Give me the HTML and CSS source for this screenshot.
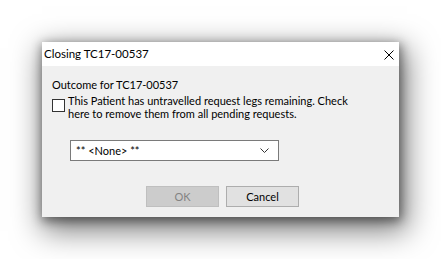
FILE: index.html
```html
<!DOCTYPE html>
<html>
<head>
<meta charset="utf-8">
<link rel="stylesheet" href="styles.css">
</head>
<body>
<div class="dialog">
  <div class="titlebar">
    <span class="title">Closing TC17-00537</span>
    <span class="close">
      <svg width="10" height="10" viewBox="0 0 10 10"><path d="M0.5 0.5 L9.5 9.5 M9.5 0.5 L0.5 9.5" stroke="#000" stroke-width="1" fill="none"/></svg>
    </span>
  </div>
  <div class="content">
    <div class="label">Outcome for TC17-00537</div>
    <div class="check-row">
      <span class="checkbox"></span>
      <span class="check-text">This Patient has untravelled request legs remaining. Check<br>here to remove them from all pending requests.</span>
    </div>
    <div class="combo">
      <span class="combo-text">** &lt;None&gt; **</span>
      <svg class="chevron" width="9" height="5" viewBox="0 0 9 5"><path d="M0.5 0.5 L4.5 4.5 L8.5 0.5" stroke="#333" stroke-width="1" fill="none"/></svg>
    </div>
    <div class="buttons">
      <button class="btn disabled">OK</button>
      <button class="btn">Cancel</button>
    </div>
  </div>
</div>
</body>
</html>
```
FILE: styles.css
```css
html, body {
  margin: 0;
  padding: 0;
  background: #ffffff;
}
body {
  box-sizing: border-box;
  width: 441px;
  height: 259px;
  overflow: hidden;
  padding: 42px 0 0 42px;
  font-family: "Lato", "Noto Sans", sans-serif;
  font-size: 11px;
  color: #000;
}
.dialog {
  width: 357px;
  height: 175px;
  background: #f0f0f0;
  box-shadow: 4px 10px 28px 4px rgba(0,0,0,0.5), 1px 3px 10px 1px rgba(0,0,0,0.45);
  display: flex;
  flex-direction: column;
}
.titlebar {
  height: 24px;
  flex: none;
  background: #ffffff;
  display: flex;
  align-items: center;
  justify-content: space-between;
  padding: 0 4px 0 2px;
  box-sizing: border-box;
}
.title {
  font-size: 11.5px;
  line-height: 14px;
}
.close {
  display: flex;
  width: 10px;
  height: 10px;
  margin-right: 1px;
  margin-top: 2px;
}
.content {
  padding: 12px 0 0 10px;
  display: flex;
  flex-direction: column;
}
.label {
  line-height: 14px;
}
.check-row {
  display: flex;
  align-items: flex-start;
  margin-top: 2px;
}
.checkbox {
  width: 11px;
  height: 11px;
  border: 1px solid #333;
  background: #fff;
  margin-top: 5px;
  flex: none;
}
.check-text {
  margin-left: 3px;
  line-height: 13px;
}
.combo {
  margin: 20px 0 0 18px;
  width: 209px;
  height: 21px;
  flex: none;
  box-sizing: border-box;
  border: 1px solid #7a7a7a;
  background: #fff;
  display: flex;
  align-items: center;
  justify-content: space-between;
  padding: 0 9px 0 5px;
}
.combo-text {
  line-height: 14px;
}
.chevron {
  display: block;
}
.buttons {
  display: flex;
  gap: 7px;
  margin: 25px 0 0 94px;
}
.btn {
  width: 73px;
  height: 21px;
  box-sizing: border-box;
  border: 1px solid #adadad;
  background: #e1e1e1;
  font-family: "Lato", "Noto Sans", sans-serif;
  font-size: 11px;
  color: #000;
  padding: 0;
  line-height: 14px;
}
.btn.disabled {
  border-color: #bfbfbf;
  background: #cccccc;
  color: #838383;
}
```
